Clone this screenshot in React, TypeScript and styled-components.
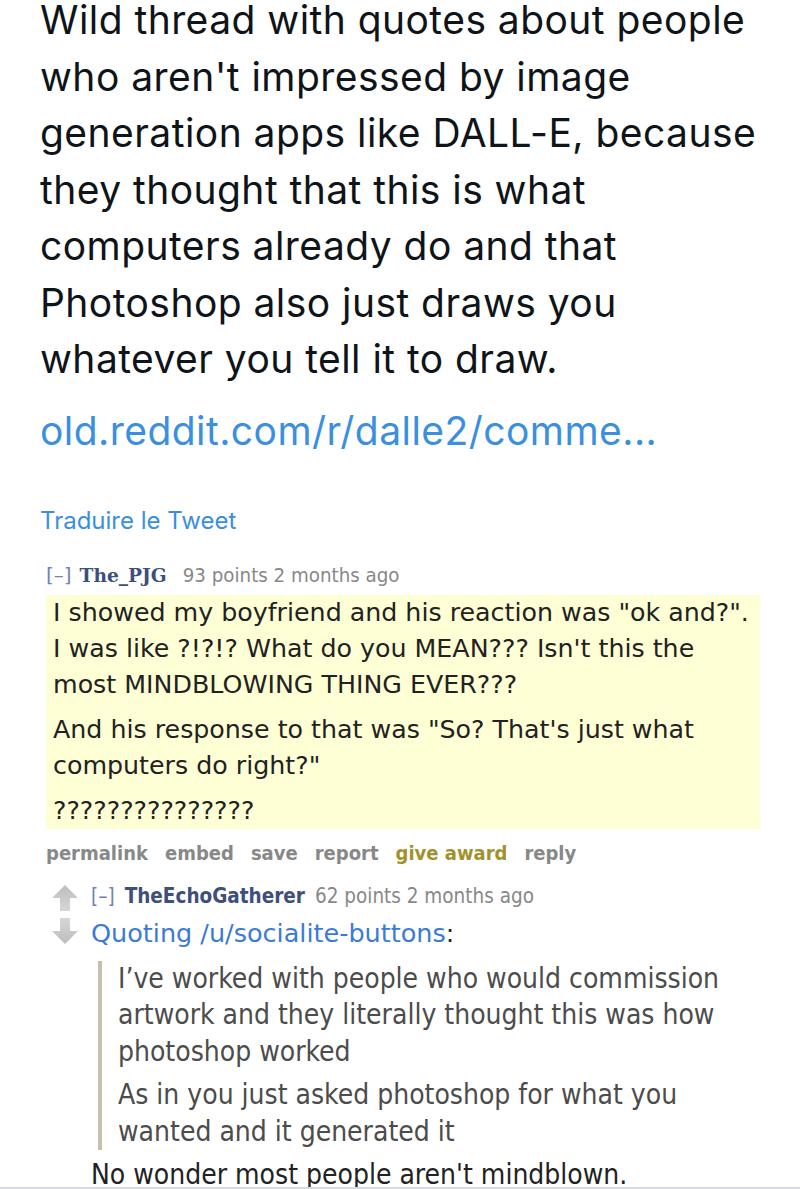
import styled, { createGlobalStyle } from 'styled-components';

const GlobalStyle = createGlobalStyle`
  html, body {
    margin: 0;
    padding: 0;
    background: #ffffff;
  }
  body {
    overflow: hidden;
  }
`;

const tweetLines = [
  'Wild thread with quotes about people',
  "who aren't impressed by image",
  'generation apps like DALL-E, because',
  'they thought that this is what',
  'computers already do and that',
  'Photoshop also just draws you',
  'whatever you tell it to draw.',
];

const ArrowUp = () => (
  <svg width="28" height="28" viewBox="0 0 28 28">
    <defs>
      <linearGradient id="upg" x1="0" y1="0" x2="0" y2="1">
        <stop offset="0" stopColor="#bdbdbd" />
        <stop offset="1" stopColor="#d6d6d6" />
      </linearGradient>
    </defs>
    <path d="M14 1 L27 14 L19 14 L19 27 L9 27 L9 14 L1 14 Z" fill="url(#upg)" />
  </svg>
);

const ArrowDown = () => (
  <svg width="28" height="28" viewBox="0 0 28 28">
    <defs>
      <linearGradient id="downg" x1="0" y1="0" x2="0" y2="1">
        <stop offset="0" stopColor="#d6d6d6" />
        <stop offset="1" stopColor="#bdbdbd" />
      </linearGradient>
    </defs>
    <path d="M9 1 L19 1 L19 14 L27 14 L14 27 L1 14 L9 14 Z" fill="url(#downg)" />
  </svg>
);

export default function App() {
  return (
    <Page>
      <GlobalStyle />
      <Tweet>
        <TweetText>
          {tweetLines.map((line) => (
            <Line key={line}>{line}</Line>
          ))}
        </TweetText>
        <TweetLink>old.reddit.com/r/dalle2/comme...</TweetLink>
        <Translate>Traduire le Tweet</Translate>
      </Tweet>

      <Thread>
        <Tagline>
          <Collapse>[–]</Collapse>
          <Author>The_PJG</Author>
          <Score>93 points 2 months ago</Score>
        </Tagline>
        <HighlightBody>
          <Para>
            I showed my boyfriend and his reaction was "ok and?".
            <br />
            I was like ?!?!? What do you MEAN??? Isn't this the
            <br />
            most MINDBLOWING THING EVER???
          </Para>
          <Para>
            And his response to that was "So? That's just what
            <br />
            computers do right?"
          </Para>
          <Para>???????????????</Para>
        </HighlightBody>
        <Buttons>
          <ButtonLink>permalink</ButtonLink>
          <ButtonLink>embed</ButtonLink>
          <ButtonLink>save</ButtonLink>
          <ButtonLink>report</ButtonLink>
          <ButtonLink $gold>give award</ButtonLink>
          <ButtonLink>reply</ButtonLink>
        </Buttons>

        <Child>
          <Votes>
            <ArrowUp />
            <ArrowDown />
          </Votes>
          <ChildBody>
            <ChildTagline>
              <Collapse>[–]</Collapse>
              <ChildAuthor>TheEchoGatherer</ChildAuthor>
              <ChildScore>62 points 2 months ago</ChildScore>
            </ChildTagline>
            <Quoting>
              <QuoteLink>Quoting /u/socialite-buttons</QuoteLink>:
            </Quoting>
            <Quote>
              <QuotePara>
                I’ve worked with people who would commission
                <br />
                artwork and they literally thought this was how
                <br />
                photoshop worked
              </QuotePara>
              <QuotePara>
                As in you just asked photoshop for what you
                <br />
                wanted and it generated it
              </QuotePara>
            </Quote>
            <Closing>No wonder most people aren't mindblown.</Closing>
          </ChildBody>
        </Child>
      </Thread>
      <BottomRule />
    </Page>
  );
}

const Page = styled.div`
  width: 800px;
  height: 1189px;
  position: relative;
  overflow: hidden;
  background: #ffffff;
`;

const Tweet = styled.div`
  padding-left: 40px;
  margin-top: -8px;
  font-family: Inter, 'Noto Sans', sans-serif;
`;

const TweetText = styled.div`
  font-size: 39px;
  line-height: 56.5px;
  color: #0f1419;
  letter-spacing: 0.45px;
`;

const Line = styled.div`
  white-space: nowrap;
`;

const TweetLink = styled.div`
  margin-top: 15px;
  font-size: 39px;
  line-height: 56px;
  color: #3a8fe0;
  letter-spacing: 0.45px;
`;

const Translate = styled.div`
  margin-top: 46px;
  font-size: 24px;
  line-height: 32px;
  color: #3a8fe0;
`;

const Thread = styled.div`
  padding-left: 46px;
  margin-top: 26px;
`;

const Tagline = styled.div`
  display: flex;
  align-items: baseline;
  font-size: 20px;
  line-height: 24px;
  height: 24px;
`;

const Collapse = styled.span`
  color: #7084b4;
  font-family: 'DejaVu Sans', sans-serif;
  font-size: 20px;
  margin-right: 8px;
`;

const Author = styled.span`
  color: #3d4f7a;
  font-weight: bold;
  font-family: 'DejaVu Serif', serif;
  font-size: 18.6px;
  margin-right: 16px;
`;

const Score = styled.span`
  color: #888888;
  font-family: 'DejaVu Sans Condensed', 'DejaVu Sans', sans-serif;
  font-size: 20.3px;
`;

const HighlightBody = styled.div`
  margin-top: 8px;
  width: 714px;
  box-sizing: border-box;
  padding-left: 7px;
  background: #ffffd6;
  font-family: 'DejaVu Sans', Verdana, sans-serif;
  font-size: 25.3px;
  line-height: 36px;
  color: #222222;
`;

const Para = styled.p`
  margin: 0;
  white-space: nowrap;
  & + & {
    margin-top: 9px;
  }
`;

const Buttons = styled.div`
  display: flex;
  gap: 17px;
  margin-top: 7px;
  height: 34px;
  align-items: center;
  font-family: 'DejaVu Sans Condensed', 'DejaVu Sans', sans-serif;
  font-size: 20px;
  font-weight: bold;
`;

const ButtonLink = styled.span<{ $gold?: boolean }>`
  color: ${(p) => (p.$gold ? '#a2922e' : '#888888')};
`;

const Child = styled.div`
  display: flex;
  margin-top: 8px;
  gap: 12px;
`;

const Votes = styled.div`
  display: flex;
  flex-direction: column;
  padding-top: 6px;
  padding-left: 5px;
  gap: 5px;
`;

const ChildBody = styled.div`
  flex: 1;
`;

const ChildTagline = styled.div`
  display: flex;
  align-items: baseline;
  gap: 10px;
  height: 36px;
  line-height: 36px;
  font-family: 'DejaVu Sans Condensed', 'DejaVu Sans', sans-serif;
  font-size: 20.5px;

  & > ${Collapse} {
    font-family: 'DejaVu Sans Condensed', 'DejaVu Sans', sans-serif;
    font-size: 20.5px;
    margin-right: 0;
  }
`;

const ChildAuthor = styled.span`
  color: #3d4f7a;
  font-weight: bold;
`;

const ChildScore = styled.span`
  color: #888888;
`;

const Quoting = styled.div`
  font-family: 'DejaVu Sans', Verdana, sans-serif;
  font-size: 25.5px;
  line-height: 38px;
  color: #222222;
`;

const QuoteLink = styled.span`
  color: #3a7bd5;
`;

const Quote = styled.div`
  margin: 9px 0 0 7px;
  padding-left: 16px;
  border-left: 4px solid #c5c1ad;
  font-family: 'DejaVu Sans Condensed', 'DejaVu Sans', sans-serif;
  font-size: 28px;
  line-height: 36.5px;
  color: #4c4c4c;
`;

const QuotePara = styled.p`
  margin: 0;
  white-space: nowrap;
  & + & {
    margin-top: 7px;
  }
`;

const Closing = styled.div`
  margin-top: 7px;
  font-family: 'DejaVu Sans Condensed', 'DejaVu Sans', sans-serif;
  font-size: 28px;
  line-height: 36px;
  color: #222222;
  white-space: nowrap;
`;

const BottomRule = styled.div`
  position: absolute;
  left: 0;
  right: 0;
  bottom: 0;
  height: 2px;
  background: #d4dbe2;
`;
